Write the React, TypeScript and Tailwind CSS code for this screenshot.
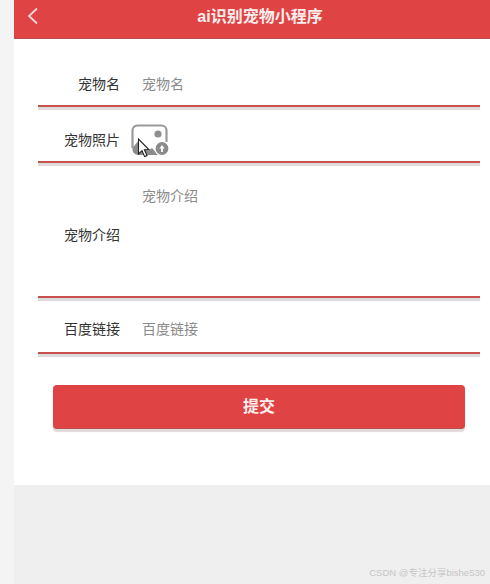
import React from "react";

function Row({ label, height, children }: { label: string; height: string; children: React.ReactNode }) {
  return (
    <div className={`flex ${height} items-center border-b-2 border-[#c9504f] shadow-[0_3px_0_#dfdbdd] mb-[3px]`}>
      <div className="w-[82px] text-right text-[14px] leading-[20px] text-[#333333] shrink-0">{label}</div>
      <div className="ml-[22px] flex-1 min-w-0">{children}</div>
    </div>
  );
}

export default function App() {
  return (
    <div className="relative w-[490px] h-[584px] overflow-hidden bg-[#efefef] font-['Liberation_Sans','Noto_Sans_CJK_SC',sans-serif]">
      <div className="flex h-full">
        <div className="w-[14px] bg-[#f4f4f4] shrink-0" />
        <div className="flex-1 min-w-0 flex flex-col">
          <header className="relative h-[39px] bg-[#e04343] border-b border-[#b94f4e] flex items-center justify-center shrink-0">
            <svg className="absolute left-[12px] top-[7px]" width="14" height="18" viewBox="0 0 14 18" fill="none">
              <path d="M11 1.5 L3 9 L11 16.5" stroke="#f6dada" strokeWidth="1.8" />
            </svg>
            <span className="text-[16px] font-bold leading-[22px] text-[#fbeeee] -mt-[5px] ml-[16px]">ai识别宠物小程序</span>
          </header>
          <main className="h-[446px] bg-white pl-[24px] pr-[10px] shrink-0">
            <div className="pt-[29px]">
              <Row label="宠物名" height="h-[39px] pb-[6px]">
                <div className="text-[14px] leading-[20px] text-[#8a8a8a]">宠物名</div>
              </Row>
              <Row label="宠物照片" height="h-[53px] pt-[8px]">
                <div className="-ml-[11px] mt-[2px]">
                  <svg className="block" width="40" height="34" viewBox="0 0 40 34" fill="none">
                    <path d="M6 1.5 H30.5 A5 5 0 0 1 35.5 6.5 V18 M1.5 24 V6.5 A5 5 0 0 1 6 1.5" stroke="#9a9a9a" strokeWidth="2.2" />
                    <circle cx="27" cy="10" r="3.6" fill="#8f8f8f" />
                    <path d="M1.5 24 L8 16 L17 27 L21 24 L27 31 H7 A5.5 5.5 0 0 1 1.5 26 Z" fill="#8b8b8b" />
                    <circle cx="31" cy="24.5" r="7" fill="#8b8b8b" stroke="#ffffff" strokeWidth="1.2" />
                    <path d="M31 21 L28.4 24.5 H30.1 V28 H31.9 V24.5 H33.6 Z" fill="#ffffff" />
                  </svg>
                </div>
              </Row>
              <Row label="宠物介绍" height="h-[132px] pt-[8px]">
                <div className="text-[14px] leading-[20px] text-[#8a8a8a] h-[98px]">宠物介绍</div>
              </Row>
              <Row label="百度链接" height="h-[53px] pt-[4px]">
                <div className="text-[14px] leading-[20px] text-[#8a8a8a]">百度链接</div>
              </Row>
            </div>
            <div className="mx-[15px] mt-[31px]">
              <button className="block w-full h-[44px] bg-[#e04343] border-b border-[#b94f4e] rounded-[4px] shadow-[0_3px_1px_#e0dadb] text-[16px] font-bold text-[#fbeeee]">
                提交
              </button>
            </div>
          </main>
        </div>
      </div>
      <svg className="absolute left-[137px] top-[138px]" width="14" height="21" viewBox="0 0 14 21">
        <path d="M1.5 1 V16 L5 12.6 L7.6 18.6 L10 17.6 L7.4 11.8 H12 Z" fill="#ffffff" stroke="#222222" strokeWidth="1.1" />
      </svg>
      <div className="absolute right-[5px] bottom-[4px] text-[9.5px] leading-[14px] text-[#c6c6c6]">CSDN @专注分享bishe530</div>
    </div>
  );
}
